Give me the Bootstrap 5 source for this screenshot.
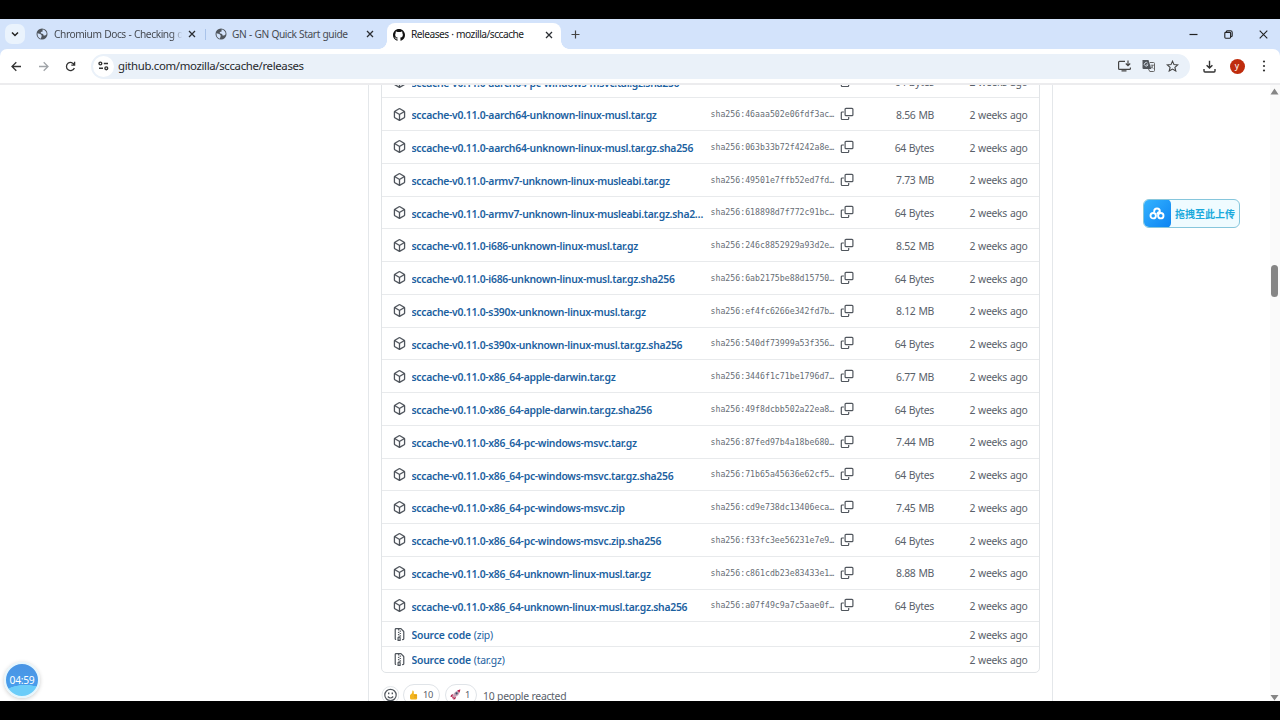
<!DOCTYPE html>
<html lang="en">
<head>
<meta charset="utf-8">
<title>Releases · mozilla/sccache</title>
<link href="https://cdn.jsdelivr.net/npm/bootstrap@5.3.0/dist/css/bootstrap.min.css" rel="stylesheet">
<style>
body{font-family:"Noto Sans","Noto Sans CJK SC",sans-serif;background:#000;width:1280px;height:720px;overflow:hidden;line-height:1.2}
svg{display:block;flex:none}
.screen{margin-top:19px;height:682px;width:1280px;background:#fff;overflow:hidden}
.tabstrip{height:30px;background:#d3e3fb;font-size:10.2px;letter-spacing:-.42px;word-spacing:.4px;color:#474b52}
.tabmenu{width:20px;height:20px;border-radius:7px;background:#eaf3fd;margin-left:5px;margin-top:5px}
.tab-item{height:30px}
.tab-one{width:180px}
.tab-one .tab-title{width:131px;margin-left:6px}
.tab-one .tab-icon{margin-left:11px}
.tab-one .tab-close{margin-left:3px}
.tab-two{width:182px}
.tab-two .tab-icon{margin-left:9px}
.tab-two .tab-title{width:129px;margin-left:5px}
.tab-two .tab-close{margin-left:5px}
.tab-close{color:#2b2e33}
.tab-title{white-space:nowrap;overflow:hidden;padding-top:1px}
.fade-end{-webkit-mask-image:linear-gradient(90deg,#000 90%,transparent 98%);mask-image:linear-gradient(90deg,#000 90%,transparent 98%)}
.tab-on{width:174px;height:26px;padding-bottom:3px;margin-top:4px;background:#fff;border-radius:8px 8px 0 0;color:#202124;position:relative}
.tab-on:before,.tab-on:after{content:"";position:absolute;bottom:0;width:8px;height:8px}
.tab-on:before{left:-8px;background:radial-gradient(circle at 0 0,transparent 7.5px,#fff 8px)}
.tab-on:after{right:-8px;background:radial-gradient(circle at 100% 0,transparent 7.5px,#fff 8px)}
.tab-on .tab-title{width:130px;margin-left:6px;letter-spacing:-.5px;padding:0 0 1px}
.tab-on .tab-close{margin-left:4px}
.sep{width:1px;height:11px;background:#a9c3ea}
.toolbar{height:36px;background:#fff;border-bottom:2px solid #ececee;border-radius:7px 7px 0 0}
.toolwrap{background:#d3e3fb}
.omni{width:1099px;height:25px;border-radius:13px;background:#eaf1f9;font-size:11.4px;color:#27292c}
.url{margin-left:4px;letter-spacing:-.34px}
.site{width:21px;height:21px;border-radius:50%;background:#fff;margin-left:2px}
.avatar{width:15px;height:15px;border-radius:50%;background:#bf2c0d;color:#fff;font-size:8.5px;line-height:13px;text-align:center}
.page{height:616px;overflow:hidden;position:relative}
.release{width:685px;height:616px;margin-left:368px;border-left:1px solid #e4e7ea;border-right:1px solid #e4e7ea}
.assets{width:659px;margin-left:12px;margin-top:-20.5px;border:1px solid #e1e4e7;border-radius:5px;color:#59616a;font-size:10.4px;letter-spacing:-.3px;word-spacing:.5px}
.arow{height:32.76px;border-bottom:1px solid #e8eaec;padding-left:11px;padding-right:11.5px}
.srow{height:24.7px}
.arow:last-child{border-bottom:0}
.arow span{padding-top:2px}
.arow .aname{width:293px;margin-left:5.5px;color:#1c619f;font-weight:600;letter-spacing:-.285px;overflow:hidden;text-overflow:ellipsis;white-space:nowrap;padding-top:5px;padding-bottom:2px}
.srow .aname{padding-top:4px;letter-spacing:-.22px}
.aname small{font-weight:400;font-size:10.4px}
.hash{width:124px;margin-left:6px;font-family:"DejaVu Sans Mono",monospace;font-size:8.2px;letter-spacing:.02px;color:#666d75;white-space:nowrap}
.copy{margin-left:5.5px}
.size{width:80px;text-align:right}
.react{font-size:10.4px;color:#59616a;margin-left:12px;margin-top:11px;letter-spacing:-.3px;word-spacing:.4px}
.pill{height:22px;border:1px solid #e0e4e8;border-radius:11px;font-size:9.3px}
.scroll{right:0;top:0;width:10px;height:616px;background:#fafafa}
.thumb{left:1px;top:180px;width:7px;height:32px;border-radius:4px;background:#858585}
.upload{left:1143px;top:114px;width:97px;height:29px;border:1px solid #86c6dc;border-radius:6px;background:#effbff;color:#1aa9dc;font:700 10px "Noto Sans CJK SC",sans-serif;overflow:hidden}
.cloud{width:28px;height:29px;background:linear-gradient(135deg,#35b4ff,#0c83f2);border-radius:5px;margin-left:-1px}
.timer{left:4px;top:577px;width:36px;height:36px;border-radius:50%;border:2px solid #e6f6fd;background:radial-gradient(ellipse 22px 10px at 60% 96%,#6ccdf9 95%,transparent),linear-gradient(#4a94e4,#48a2ef);box-shadow:0 1px 4px #0003;color:#fff;font-size:10.3px;letter-spacing:-.3px}
</style>
</head>
<body>
<svg width="0" height="0" class="position-absolute"><defs>
<symbol id="pkg" viewBox="0 0 16 16"><path stroke="#50565d" stroke-width=".1" d="m8.878.392 5.25 3.045c.54.314.872.89.872 1.514v6.098a1.75 1.75 0 0 1-.872 1.514l-5.25 3.045a1.75 1.75 0 0 1-1.756 0l-5.25-3.045A1.75 1.75 0 0 1 1 11.049V4.951c0-.624.332-1.201.872-1.514L7.122.392a1.75 1.75 0 0 1 1.756 0ZM7.875 1.69l-4.63 2.685L8 7.133l4.755-2.758-4.63-2.685a.248.248 0 0 0-.25 0ZM2.5 5.677v5.372c0 .09.047.171.125.216l4.625 2.683V8.432Zm6.25 8.271 4.625-2.683a.25.25 0 0 0 .125-.216V5.677L8.75 8.432Z"/></symbol>
<symbol id="copy" viewBox="0 0 14 14"><path fill="none" stroke="currentColor" stroke-width="1.2" d="M6 1.400h6q.9 0 .9.900v5.400q0 .9-.9.900H6q-.9 0-.9-.9V2.300q0-.9.900-.9zM3.900 5H2.200q-.9 0-.9.900v5.700q0 .9.900.9h5.600q.9 0 .9-.9v-1.500"/></symbol>
<symbol id="zip" viewBox="0 0 16 16"><path d="M3.5 1.75v11.5c0 .09.048.173.126.217a.75.75 0 0 1-.752 1.298A1.748 1.748 0 0 1 2 13.25V1.75C2 .784 2.784 0 3.75 0h5.586c.464 0 .909.185 1.237.513l2.914 2.914c.329.328.513.773.513 1.237v8.586A1.75 1.75 0 0 1 12.25 15h-.5a.75.75 0 0 1 0-1.500h.5a.25.25 0 0 0 .25-.25V4.664a.25.25 0 0 0-.073-.177L9.513 1.573a.25.25 0 0 0-.177-.073H7.250a.75.75 0 0 1 0 1.500h-.500a.75.75 0 0 1 0-1.500h-3a.25.25 0 0 0-.25.25Zm3.750 8.750h.500c.966 0 1.750.784 1.750 1.750v3a.75.75 0 0 1-.750.750h-2.500a.75.75 0 0 1-.750-.750v-3c0-.966.784-1.750 1.750-1.750ZM6 5.250a.75.75 0 0 1 .750-.750h.500a.75.75 0 0 1 0 1.500h-.500A.75.75 0 0 1 6 5.250Zm.750 2.250h.500a.75.75 0 0 1 0 1.500h-.500a.75.75 0 0 1 0-1.500ZM8 6.750A.75.75 0 0 1 8.750 6h.500a.75.75 0 0 1 0 1.500h-.500A.75.75 0 0 1 8 6.750ZM8.750 3h.500a.75.75 0 0 1 0 1.500h-.500a.75.75 0 0 1 0-1.500ZM8 9.750A.75.75 0 0 1 8.750 9h.500a.75.75 0 0 1 0 1.500h-.500A.75.75 0 0 1 8 9.750Zm-1 2.500v2.250h1v-2.250a.25.25 0 0 0-.250-.250h-.500a.25.25 0 0 0-.250.250Z"/></symbol>
<symbol id="globe" viewBox="0 0 12 12"><circle cx="6" cy="6" r="5.500" fill="#50565d"/><path fill="#d3e3fb" d="M1.500 5.300 4.300 6.100 5.600 7.200v1.300L4.800 10.700C2.800 10.200 1.300 8.300 1.500 5.300zM6.500 1.500c1.900.2 3.300 1.300 4 3.200l.1 1.500-1.400 1.400H7.600L7.100 5.900 4.700 5.200l.2-1.300 1.700-.4z"/></symbol>
<symbol id="xx" viewBox="0 0 8 8"><path d="m1 1 6 6M7 1 1 7" stroke="currentColor" stroke-width="1.300"/></symbol>
</defs></svg>
<main class="screen">
<div class="tabstrip d-flex">
  <div class="tabmenu d-flex align-items-center justify-content-center"><svg width="8" height="6" viewBox="0 0 8 6"><path d="m1 1.500 3 3 3-3" fill="none" stroke="#222" stroke-width="1.500"/></svg></div>
  <div class="tab-item tab-one d-flex align-items-center"><svg class="tab-icon" width="12" height="12"><use href="#globe"/></svg><span class="tab-title fade-end">Chromium Docs - Checking o</span><svg class="tab-close" width="8" height="8"><use href="#xx"/></svg></div>
  <div class="tab-item tab-two d-flex align-items-center"><span class="sep"></span><svg class="tab-icon" width="12" height="12"><use href="#globe"/></svg><span class="tab-title">GN - GN Quick Start guide</span><svg class="tab-close" width="8" height="8"><use href="#xx"/></svg></div>
  <div class="tab-on d-flex align-items-center"><svg width="12" height="12" viewBox="0 0 16 16" style="margin-left:6px"><path fill="#111" d="M8 0c4.420 0 8 3.580 8 8a8.013 8.013 0 0 1-5.450 7.590c-.4.080-.55-.170-.55-.380 0-.270.010-1.130.010-2.200 0-.750-.250-1.230-.540-1.480 1.780-.200 3.650-.880 3.650-3.950 0-.880-.310-1.590-.820-2.150.080-.200.360-1.020-.080-2.120 0 0-.670-.220-2.200.820-.640-.180-1.320-.270-2-.270-.680 0-1.360.090-2 .270-1.530-1.030-2.200-.820-2.200-.820-.440 1.100-.160 1.920-.080 2.120-.510.560-.820 1.280-.820 2.150 0 3.060 1.860 3.750 3.640 3.950-.230.200-.440.550-.510 1.070-.460.210-1.610.550-2.330-.660-.150-.240-.600-.830-1.230-.820-.670.010-.270.380.010.530.340.190.730.900.820 1.130.160.450.680 1.310 2.690.940 0 .670.010 1.300.010 1.490 0 .210-.150.450-.550.380A7.995 7.995 0 0 1 0 8c0-4.420 3.580-8 8-8Z"/></svg><span class="tab-title">Releases · mozilla/sccache</span><svg class="tab-close" width="8" height="8"><use href="#xx"/></svg></div>
  <svg width="9" height="9" viewBox="0 0 9 9" style="margin:11px 0 0 10px"><path d="M4.500.5v8M.5 4.500h8" stroke="#444" stroke-width="1.200"/></svg>
  <div class="ms-auto d-flex align-items-center" style="gap:26px;margin-right:12px;height:30px"><svg width="9" height="9"><path d="M.5 4.500h8" stroke="#222" stroke-width="1.200"/></svg><svg width="9" height="9" viewBox="0 0 9 9"><path d="M2.300 2V1.700q.2-1 1.200-1h3q1.700 0 1.700 1.700v3q0 1-1 1.300M1.700 2.400h4q.9 0 .9.900v4q0 .9-.9.900h-4q-.9 0-.9-.9v-4q0-.9.9-.9z" fill="none" stroke="#222" stroke-width="1.100"/></svg><svg width="9" height="9" viewBox="0 0 9 9"><path d="m.7.7 7.600 7.600M8.300.7.7 8.300" stroke="#222" stroke-width="1.100"/></svg></div>
</div>
<div class="toolwrap"><div class="toolbar d-flex align-items-center">
  <svg width="91" height="34" viewBox="0 0 91 34" fill="none" stroke-width="1.300"><path stroke="#333" d="M21 17.500h-9m4.300-4.300L12 17.500l4.300 4.300M74.300 15.800a4.100 4.100 0 1 0 .1 3.200M74.600 12.800v3.300h-3.300"/><path stroke="#a0a4a8" d="M39 17.500h9m-4.300-4.300 4.300 4.300-4.300 4.300"/></svg>
  <div class="omni d-flex align-items-center"><span class="site d-flex align-items-center justify-content-center"><svg width="11" height="10" viewBox="0 0 11 10" fill="none" stroke="#333" stroke-width="1.400"><circle cx="2.400" cy="2.500" r="1.400"/><path d="M5.800 2.500H10M1 7.300h4"/><circle cx="8.300" cy="7.300" r="1.400"/></svg></span><span class="url">github.com/mozilla/sccache/releases</span>
   <div class="ms-auto d-flex align-items-center" style="gap:11px;margin-right:11px">
    <svg width="13" height="12" viewBox="0 0 13 12" fill="none" stroke="#444" stroke-width="1.200"><path d="M7 1.300H1.500q-.9 0-.9.900v6.200q0 .9.900.9h10q.9 0 .9-.9V7.500M3.500 10.800h5M10 .5v5M7.800 3.500 10 5.700l2.200-2.200"/></svg>
    <svg width="13" height="12" viewBox="0 0 13 12"><path d="M.5 0h6l2.800 9H1.500q-1 0-1-1z" fill="#50555b"/><path d="M7.800 2.500h3.700q1 0 1 1v7q0 1-1 1H7.800L6.500 9" fill="none" stroke="#666"/><path d="M5.700 3.300a1.800 1.800 0 1 0 .2 1.500H4.300" fill="none" stroke="#dce5ef" stroke-width=".9"/><path d="M8.600 5.200h3.200M10.800 5.200q-.5 2-1.600 3M9.300 6.500l2 2.200" fill="none" stroke="#555" stroke-width=".8"/></svg>
    <svg width="13" height="12" viewBox="0 0 13 12"><path d="m6.500 1.200 1.500 3.400 3.700.4-2.800 2.400.9 3.600-3.300-1.900L3.200 11l.9-3.600L1.300 5 5 4.600z" fill="none" stroke="#444" stroke-width="1.100"/></svg>
   </div></div>
  <svg width="13" height="13" viewBox="0 0 13 13" style="margin-left:13px" fill="none" stroke="#333" stroke-width="1.400"><path d="M6.500.8v7M3.600 5.200l2.900 2.900 2.900-2.900M1 9v2q0 1 1 1h9q1 0 1-1V9"/></svg>
  <span class="avatar" style="margin-left:13.5px">y</span>
  <svg width="4" height="12" viewBox="0 0 4 12" style="margin-left:17.5px" fill="#333"><circle cx="2" cy="1.500" r="1.100"/><circle cx="2" cy="6" r="1.100"/><circle cx="2" cy="10.500" r="1.100"/></svg>
</div></div>
<div class="page">
 <div class="release d-flex flex-column">
  <div class="assets flex-shrink-0" id="assets"></div>
  <div class="react d-flex align-items-center">
   <svg width="18" height="20" viewBox="0 0 18 20" fill="none" stroke="#50565d"><circle cx="9.500" cy="10" r="8.500" stroke="#e3e7ea"/><circle cx="9.500" cy="10" r="5.700" stroke-width="1.200"/><path d="M6.800 11.500q2.700 3 5.400 0" stroke-width="1.200"/><path d="M7.700 7.500v1.700M11.300 7.500v1.700" stroke-width="1.400"/></svg>
   <span class="pill d-flex align-items-center" style="width:37px;margin-left:4px"><svg width="9" height="10" viewBox="0 0 9 10" style="margin-left:5px"><path d="M3.500.5q1.300-.2 1.300 1.500v2h2.500q1 0 .8 1v3.500q0 1-1.200 1H2.500Q1 9.500 1 8V5.500q0-1 1-1.300 1.500-.8 1.500-3.700z" fill="#f3b51f"/><path d="M5 5.500h3M5 7.100h3" stroke="#d28b13" stroke-width=".5"/></svg><span style="margin-left:5px">10</span></span>
   <span class="pill d-flex align-items-center" style="width:32px;margin-left:5px"><svg width="11" height="11" viewBox="0 0 11 11" style="margin-left:4px"><path d="M3 5 1 6l-.5 2 2-.3M6 8l-.8 2.200-2 .4.300-2" fill="#b0214c"/><path d="M2.700 7.200Q4 2 10.300.5 10 6.500 4 8.700z" fill="#c9a3b5"/><path d="M7.300 1.500Q8.500.8 10.300.5q-.2 1.800-1 3.100zM2.700 7.200 4 8.700 2 9.500z" fill="#c2204c"/><circle cx="6.600" cy="4.400" r="1.100" fill="#34516c"/></svg><span style="margin-left:4px">1</span></span>
   <span style="margin-left:6px;padding-top:2px;line-height:12px">10 people reacted</span>
  </div>
 </div>
 <div class="scroll position-absolute"><svg width="10" height="616" fill="#858585"><path d="m.5 9.500 4-6 4 6zM.5 610h8l-4 5.500z"/></svg><div class="thumb position-absolute"></div></div>
 <div class="upload position-absolute d-flex align-items-center"><span class="cloud d-flex align-items-center justify-content-center"><svg width="16" height="13" viewBox="0 0 16 13" fill="none" stroke="#fff" stroke-width="1.900"><circle cx="4.200" cy="8.700" r="2.700"/><circle cx="11.800" cy="8.700" r="2.700"/><path d="M5.200 5.500V4.300a2.800 2.800 0 0 1 5.600 0v.4Q9 5.500 8 7"/></svg></span><span style="margin-left:4px">拖拽至此上传</span></div>
 <div class="timer position-absolute d-flex align-items-center justify-content-center">04:59</div>
</div>
</main>
<script src="https://cdn.jsdelivr.net/npm/bootstrap@5.3.0/dist/js/bootstrap.bundle.min.js"></script>
<script>
const assets=[
["aarch64-pc-windows-msvc.tar.gz.sha256","00620fa7377625285…","64 Bytes"],
["aarch64-unknown-linux-musl.tar.gz","46aaa502e06fdf3ac…","8.56 MB"],
["aarch64-unknown-linux-musl.tar.gz.sha256","063b33b72f4242a8e…","64 Bytes"],
["armv7-unknown-linux-musleabi.tar.gz","49501e7ffb52ed7fd…","7.73 MB"],
["armv7-unknown-linux-musleabi.tar.gz.sha256","618898d7f772c91bc…","64 Bytes"],
["i686-unknown-linux-musl.tar.gz","246c8852929a93d2e…","8.52 MB"],
["i686-unknown-linux-musl.tar.gz.sha256","6ab2175be88d15750…","64 Bytes"],
["s390x-unknown-linux-musl.tar.gz","ef4fc6266e342fd7b…","8.12 MB"],
["s390x-unknown-linux-musl.tar.gz.sha256","540df73999a53f356…","64 Bytes"],
["x86_64-apple-darwin.tar.gz","3446f1c71be1796d7…","6.77 MB"],
["x86_64-apple-darwin.tar.gz.sha256","49f8dcbb502a22ea8…","64 Bytes"],
["x86_64-pc-windows-msvc.tar.gz","87fed97b4a18be680…","7.44 MB"],
["x86_64-pc-windows-msvc.tar.gz.sha256","71b65a45636e62cf5…","64 Bytes"],
["x86_64-pc-windows-msvc.zip","cd9e738dc13406eca…","7.45 MB"],
["x86_64-pc-windows-msvc.zip.sha256","f33fc3ee56231e7e9…","64 Bytes"],
["x86_64-unknown-linux-musl.tar.gz","c861cdb23e83433e1…","8.88 MB"],
["x86_64-unknown-linux-musl.tar.gz.sha256","a07f49c9a7c5aae0f…","64 Bytes"]];
const icon=(id,s,c="")=>`<svg class="${c}" width="${s}" height="${s}" fill="#50565d" color="#50565d"><use href="#${id}"/></svg>`;
document.getElementById("assets").innerHTML=assets.map(([n,h,s])=>`<div class="arow d-flex align-items-center">${icon("pkg",13)}<span class="aname">sccache-v0.11.0-${n}</span><span class="hash">sha256:${h}</span>${icon("copy",14,"copy")}<span class="size">${s}</span><span class="ms-auto">2 weeks ago</span></div>`).join("")
+["zip","tar.gz"].map(n=>`<div class="arow srow d-flex align-items-center">${icon("zip",13)}<span class="aname">Source code <small>(${n})</small></span><span class="ms-auto">2 weeks ago</span></div>`).join("");
</script>
</body>
</html>
